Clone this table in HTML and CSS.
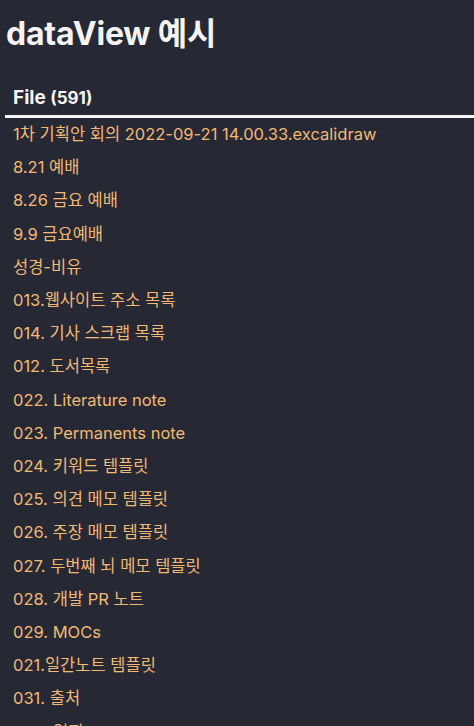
FILE: index.html
```html
<!DOCTYPE html>
<html lang="ko">
<head>
<meta charset="utf-8">
<title>dataView 예시</title>
<link rel="stylesheet" href="styles.css">
</head>
<body>
<main class="page">
  <h1 class="title">dataView 예시</h1>
  <table class="table">
    <thead>
      <tr><th class="head">File <span class="count">(591)</span></th></tr>
    </thead>
    <tbody>
      <tr><td>1차 기획안 회의 2022-09-21 14.00.33.excalidraw</td></tr>
      <tr><td>8.21 예배</td></tr>
      <tr><td>8.26 금요 예배</td></tr>
      <tr><td>9.9 금요예배</td></tr>
      <tr><td>성경-비유</td></tr>
      <tr><td>013.웹사이트 주소 목록</td></tr>
      <tr><td>014. 기사 스크랩 목록</td></tr>
      <tr><td>012. 도서목록</td></tr>
      <tr><td>022. Literature note</td></tr>
      <tr><td>023. Permanents note</td></tr>
      <tr><td>024. 키워드 템플릿</td></tr>
      <tr><td>025. 의견 메모 템플릿</td></tr>
      <tr><td>026. 주장 메모 템플릿</td></tr>
      <tr><td>027. 두번째 뇌 메모 템플릿</td></tr>
      <tr><td>028. 개발 PR 노트</td></tr>
      <tr><td>029. MOCs</td></tr>
      <tr><td>021.일간노트 템플릿</td></tr>
      <tr><td>031. 출처</td></tr>
      <tr><td>032. 일지</td></tr>
    </tbody>
  </table>
</main>
</body>
</html>
```
FILE: styles.css
```css
html, body {
  margin: 0;
  padding: 0;
  background: #262834;
  overflow: hidden;
}
.page {
  padding: 0 0 0 5px;
  font-family: Inter, "Noto Sans CJK KR", sans-serif;
}
.title {
  margin: 0;
  padding: 14px 0 0 1px;
  font-size: 32px;
  line-height: 40px;
  font-weight: 700;
  color: #f4f4f4;
  letter-spacing: -0.2px;
}
.table {
  margin-top: 31px;
  width: 100%;
  border-collapse: collapse;
}
.head {
  text-align: left;
  padding: 1px 8px 5px;
  font-size: 19px;
  line-height: 24px;
  font-weight: 700;
  color: #f6f6f6;
  border-bottom: 3px solid #f4f4f4;
}
.count {
  font-size: 17px;
}
.table td {
  padding: 4px 8px;
  font-size: 16.5px;
  line-height: 25.2px;
  color: #f2b975;
  white-space: nowrap;
}
```
